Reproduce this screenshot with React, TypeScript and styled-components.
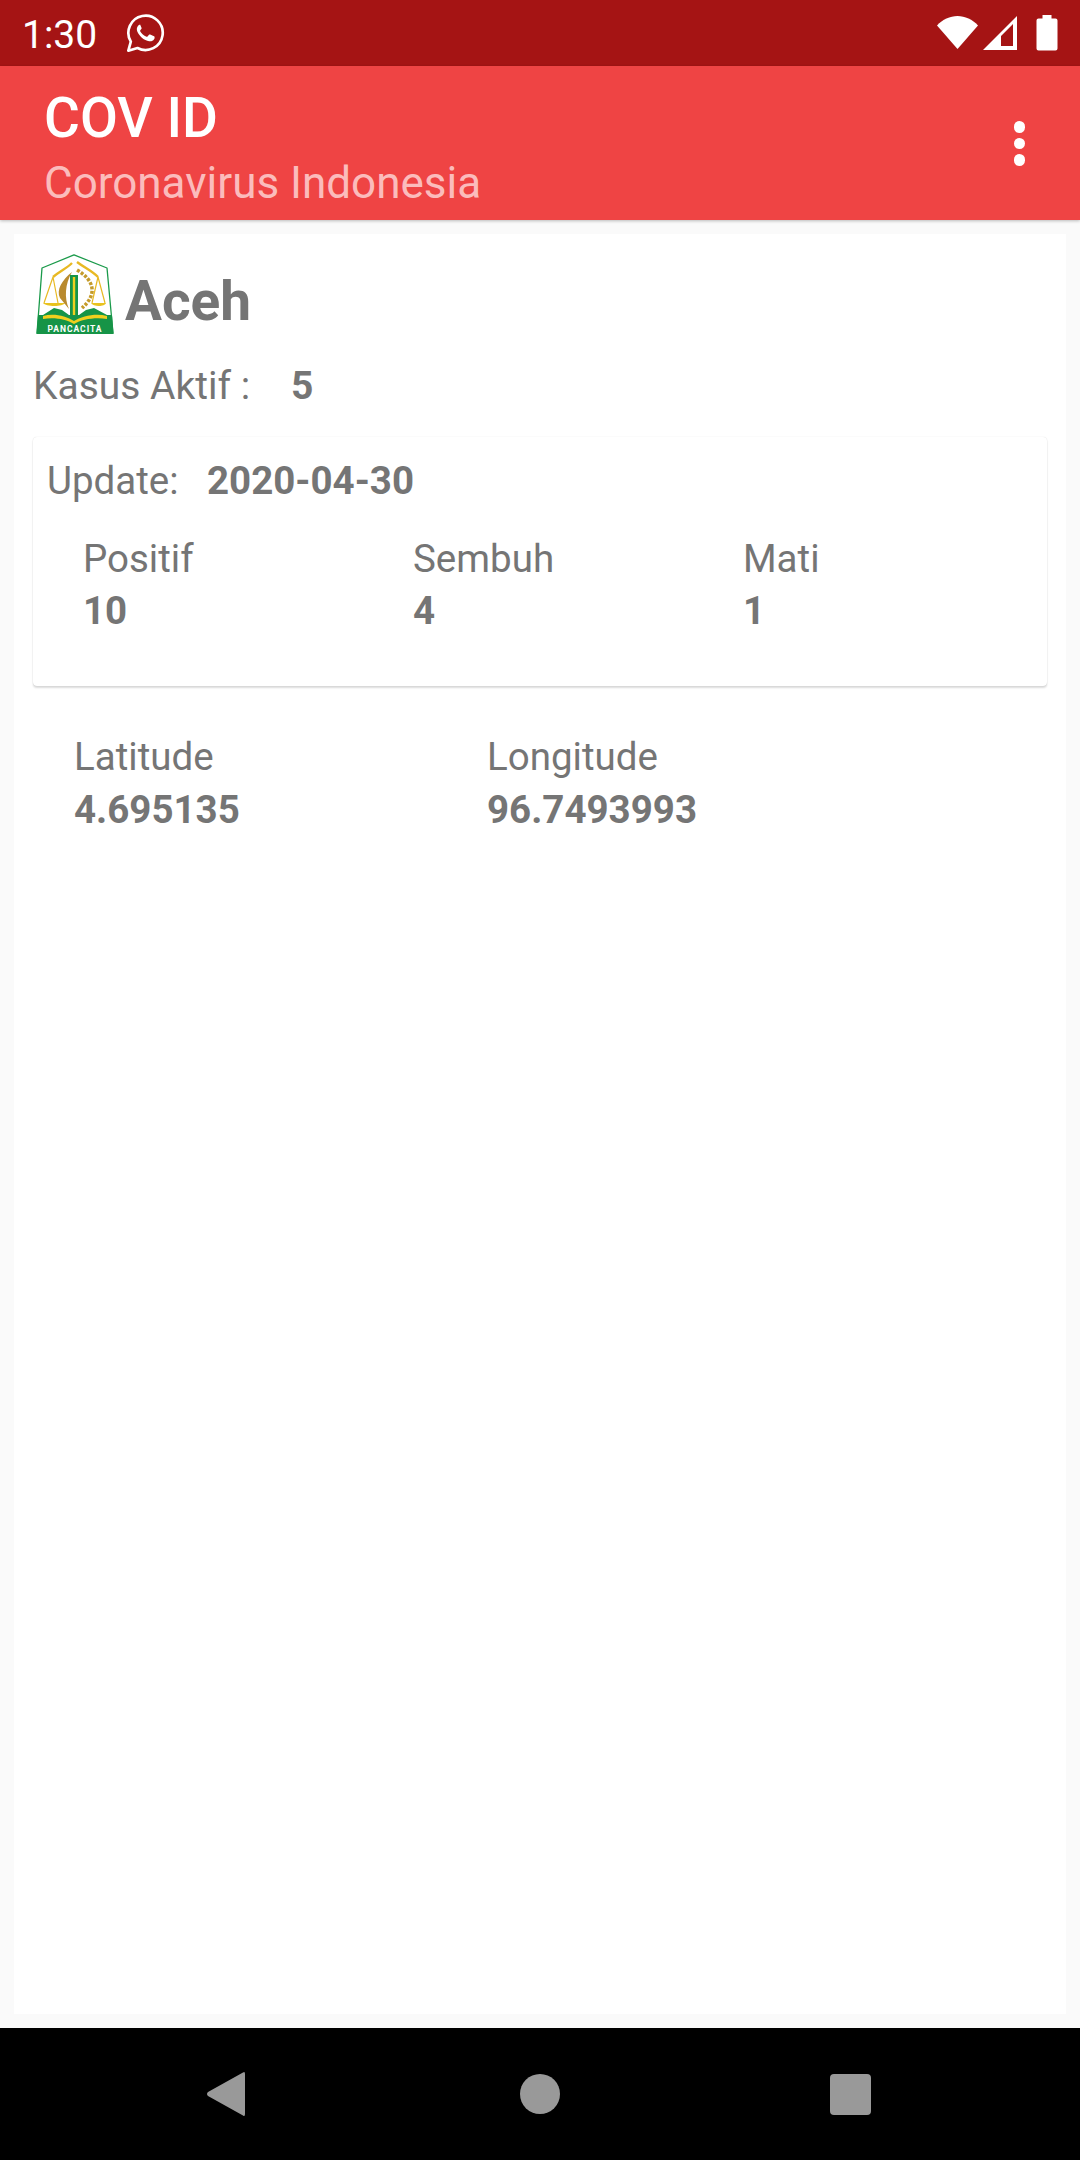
import React from "react";
import styled, { createGlobalStyle } from "styled-components";

const Global = createGlobalStyle`
  html, body { margin: 0; padding: 0; background: #fafafa; }
  body { font-family: Roboto, "Liberation Sans", sans-serif; }
  * { box-sizing: border-box; }
`;

const Screen = styled.div`
  width: 1080px;
  height: 2160px;
  display: flex;
  flex-direction: column;
  background: #fafafa;
  overflow: hidden;
`;

const StatusBar = styled.div`
  height: 66px;
  flex: none;
  background: #a51414;
  display: flex;
  align-items: center;
  padding: 0 22px 0 22px;
  color: #fff;
`;

const Clock = styled.span`
  font-size: 39px;
  line-height: 66px;
  width: 104px;
  margin-top: 3px;
`;

const StatusRight = styled.div`
  margin-left: auto;
  display: flex;
  align-items: center;
`;

const AppBar = styled.header`
  height: 154px;
  flex: none;
  background: #ef4444;
  display: flex;
  align-items: flex-start;
  justify-content: space-between;
  padding: 21px 55px 0 44px;
  box-shadow: 0 1px 3px rgba(0, 0, 0, 0.25);
  position: relative;
  z-index: 1;
`;

const Title = styled.h1`
  margin: 0;
  font-size: 55px;
  line-height: 62px;
  font-weight: 500;
  color: #fff;
`;

const Subtitle = styled.div`
  font-size: 44px;
  line-height: 50px;
  margin-top: 9px;
  color: #fbbcbc;
`;

const Dots = styled.div`
  display: flex;
  flex-direction: column;
  gap: 5px;
  margin-top: 34px;
`;

const Dot = styled.span`
  width: 11.5px;
  height: 11.5px;
  border-radius: 50%;
  background: #fff;
`;

const Main = styled.main`
  flex: 1;
  padding: 14px;
  min-height: 0;
  display: flex;
`;

const Card = styled.section`
  flex: 1;
  background: #fff;
  padding: 20px 19px 0;
  color: #757575;
`;

const Heading = styled.div`
  display: flex;
  align-items: flex-start;
  gap: 11px;
  height: 80px;
`;

const Province = styled.h2`
  margin: 15px 0 0;
  font-size: 55px;
  line-height: 64px;
  font-weight: 700;
`;

const ActiveRow = styled.div`
  display: flex;
  font-size: 39px;
  line-height: 44px;
  margin-top: 30px;
`;

const ActiveLabel = styled.span`
  width: 258px;
`;

const Strong = styled.span`
  font-weight: 700;
`;

const InnerCard = styled.div`
  margin-top: 29px;
  height: 249px;
  border-radius: 4px;
  background: #fff;
  box-shadow: 0 2px 2px rgba(0, 0, 0, 0.14), 0 0 1px rgba(0, 0, 0, 0.16);
  padding: 22px 14px 0;
`;

const UpdateRow = styled.div`
  display: flex;
  font-size: 38.5px;
  line-height: 44px;
`;

const UpdateLabel = styled.span`
  width: 160px;
`;

const StatGrid = styled.div<{ $col: number; $indent: number; $top: number; $gap: number }>`
  display: grid;
  grid-template-columns: ${(p) => p.$col}px ${(p) => p.$col}px 1fr;
  margin-left: ${(p) => p.$indent}px;
  margin-top: ${(p) => p.$top}px;
  line-height: ${(p) => p.$gap}px;
`;

const Stat = styled.div`
  display: flex;
  flex-direction: column;
  font-size: 38.5px;
`;

const WhatsApp = () => (
  <svg width="40" height="40" viewBox="0 0 24 24" fill="none" stroke="#fff" style={{ flex: "none" }}>
    <path d="M1.4 22.6l1.5-5.4A10.3 10.3 0 1 1 6.9 21z" strokeWidth="1.6" strokeLinejoin="round" />
    <path
      d="M8.6 6.9c-.4 0-.9.2-1.2.6-.5.6-.9 1.3-.9 2.2 0 1 .5 2 1.2 3 1 1.500 2.400 2.900 4.300 3.700 1.600.7 2.400.7 3.200.5.8-.2 1.700-.9 1.900-1.600.1-.5.1-1 0-1.100-.1-.2-.3-.2-.6-.4l-2-.9c-.3-.1-.5-.1-.7.1l-.9 1.100c-.2.2-.4.2-.6.1-1.700-.7-2.900-1.800-3.800-3.300-.1-.3 0-.4.1-.6l.7-.9c.1-.2.1-.4 0-.6l-.9-2.100c-.2-.3-.4-.4-.6-.4z"
      fill="#fff"
      stroke="none"
    />
  </svg>
);

const StatusIcons = () => (
  <>
    <svg width="42" height="36" viewBox="0 0 42 36" style={{ marginRight: 3 }}>
      <path d="M0 10.500C5.500 4.500 13 1 20.500 1S35.500 4.500 41 10.500L20.500 34z" fill="#fff" />
    </svg>
    <svg width="36" height="36" viewBox="0 0 36 36" style={{ marginRight: 18 }}>
      <path fillRule="evenodd" d="M35 1V35H1zM31 9L19 21V31H31z" fill="#fff" />
    </svg>
    <svg width="22" height="36" viewBox="0 0 22 36">
      <path d="M6.500 0H15.500V3.500H19.500Q21.500 3.500 21.500 5.500V33.500Q21.500 35.500 19.500 35.500H2.500Q.5 35.500 .5 33.500V5.500Q.5 3.500 2.500 3.500H6.500z" fill="#fff" />
    </svg>
  </>
);

const Emblem = () => (
  <svg width="78" height="80" viewBox="0 0 78 80" style={{ flex: "none", marginLeft: 3 }}>
    <path d="M38 .8L71 14L77 79H1L6 14z" fill="#fff" stroke="#1a9a4a" strokeWidth="1.300" strokeLinejoin="round" />
    <g fill="none" stroke="#e8b923" strokeWidth="1.200">
      <path d="M17 23L8 49M17 23L22 49M62 23L56 49M62 23L69 49" />
      <path d="M17 23C24 17 30 15 36 9M62 23C56 17 49 14 41 8" strokeWidth="2.400" />
    </g>
    <path d="M7 49H29C27 53 10 53 7 49zM55 49H70C69 53 57 53 55 49z" fill="#e8c21f" />
    <path d="M36 18C26 26 20 36 24 44L33 55C28 44 29 30 36 18z" fill="#b98a2e" />
    <path d="M41 16C58 26 62 40 46 54" fill="none" stroke="#c49b2a" strokeWidth="3.500" strokeDasharray="3 1.500" />
    <path d="M34 21H42V62H34z" fill="#169447" />
    <path d="M36.800 23H39.200V62L38 66L36.800 62z" fill="#f0cf1e" />
    <path d="M7 61L18 54L26 56L33 61zM43 61L50 56L58 54L71 61z" fill="#169447" />
    <path d="M2 61H76L77.500 80H.5z" fill="#169447" />
    <path d="M7 62C18 59 30 62 38 67C46 62 60 59 71 62V65C60 63 46 65 38 70C30 65 18 63 7 65z" fill="#f0cf1e" />
    <text x="39" y="78" textAnchor="middle" fontFamily="Roboto, sans-serif" fontWeight="700" fontSize="8.500" letterSpacing="1" fill="#fff">PANCACITA</text>
  </svg>
);

const NavBar = styled.nav`
  height: 132px;
  flex: none;
  background: #000;
  display: flex;
  align-items: center;
  padding-left: 207px;
`;

const NavIcon = styled.svg<{ $gap?: number }>`
  display: block;
  margin-left: ${(p) => p.$gap ?? 0}px;
`;

export default function App() {
  return (
    <Screen>
      <Global />
      <StatusBar>
        <Clock>1:30</Clock>
        <WhatsApp />
        <StatusRight>
          <StatusIcons />
        </StatusRight>
      </StatusBar>
      <AppBar>
        <div>
          <Title>COV ID</Title>
          <Subtitle>Coronavirus Indonesia</Subtitle>
        </div>
        <Dots>
          <Dot />
          <Dot />
          <Dot />
        </Dots>
      </AppBar>
      <Main>
        <Card>
          <Heading>
            <Emblem />
            <Province>Aceh</Province>
          </Heading>
          <ActiveRow>
            <ActiveLabel>Kasus Aktif :</ActiveLabel>
            <Strong>5</Strong>
          </ActiveRow>
          <InnerCard>
            <UpdateRow>
              <UpdateLabel>Update:</UpdateLabel>
              <Strong>2020-04-30</Strong>
            </UpdateRow>
            <StatGrid $col={330} $indent={36} $top={30} $gap={52}>
              <Stat>Positif<Strong>10</Strong></Stat>
              <Stat>Sembuh<Strong>4</Strong></Stat>
              <Stat>Mati<Strong>1</Strong></Stat>
            </StatGrid>
          </InnerCard>
          <StatGrid $col={413} $indent={41} $top={44} $gap={53}>
            <Stat>Latitude<Strong>4.695135</Strong></Stat>
            <Stat>Longitude<Strong>96.7493993</Strong></Stat>
          </StatGrid>
        </Card>
      </Main>
      <NavBar>
        <NavIcon width="38" height="46" viewBox="0 0 38 46">
          <path d="M36 1.500Q38 0 38 3V43Q38 46 36 44.500L1 25Q-1 23 1 21z" fill="#999" />
        </NavIcon>
        <NavIcon $gap={275} width="40" height="40" viewBox="0 0 40 40">
          <circle cx="20" cy="20" r="20" fill="#999" />
        </NavIcon>
        <NavIcon $gap={270} width="41" height="41" viewBox="0 0 41 41">
          <rect width="41" height="41" rx="4" fill="#999" />
        </NavIcon>
      </NavBar>
    </Screen>
  );
}
